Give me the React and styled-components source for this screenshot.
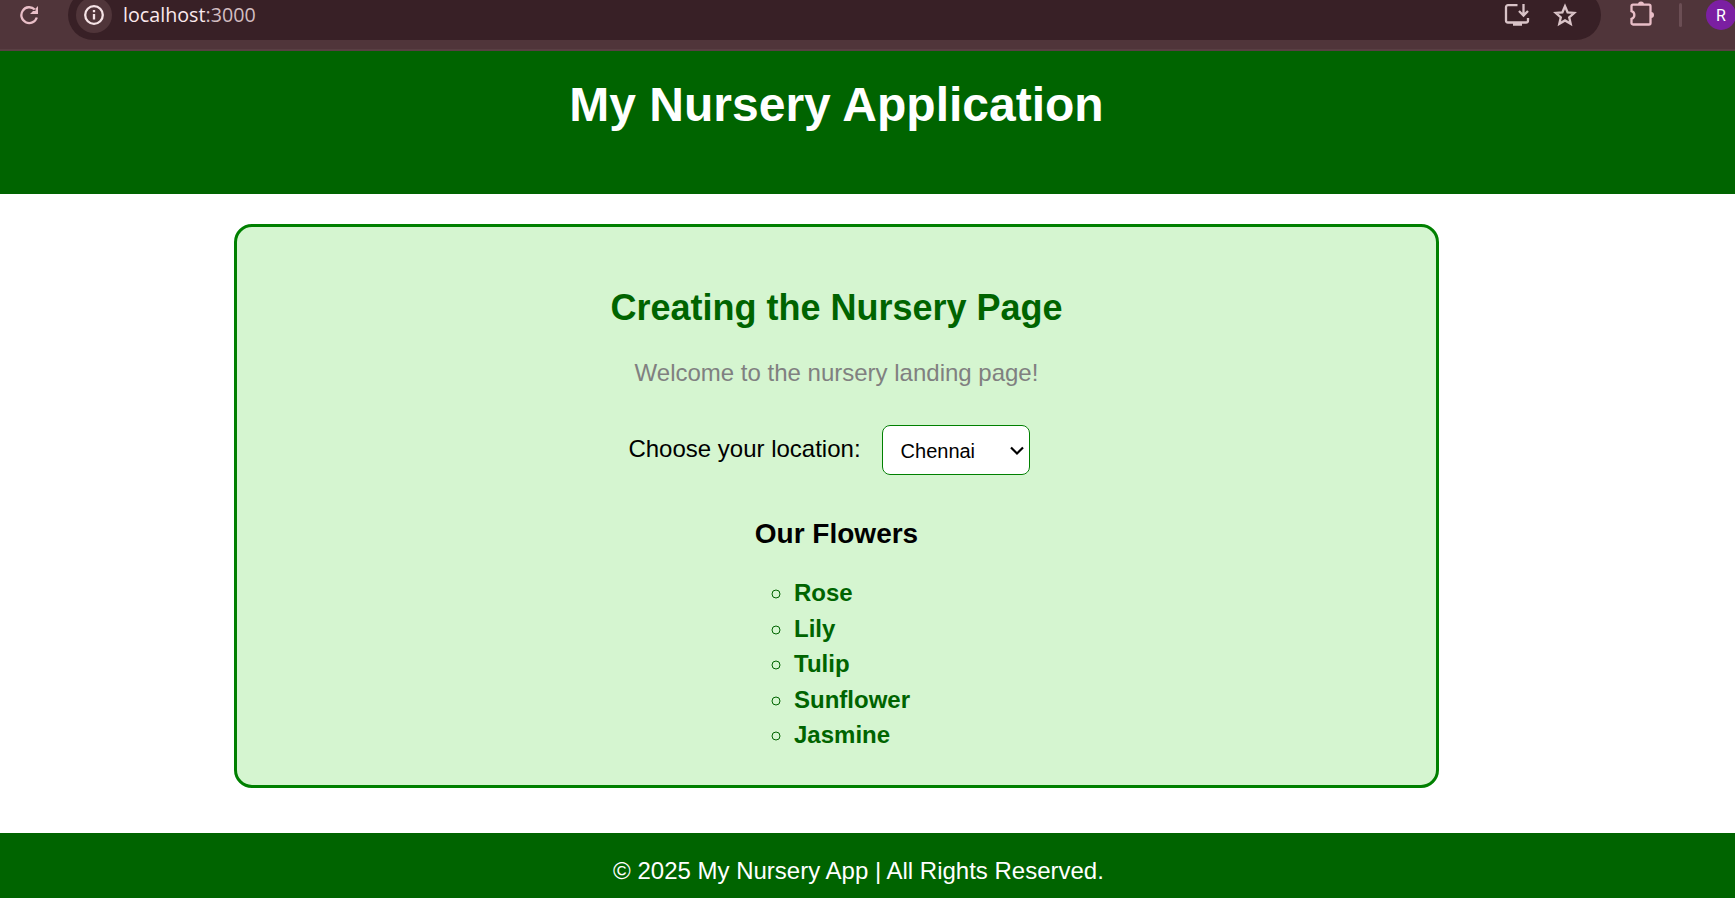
import React from "react";
import styled, { createGlobalStyle } from "styled-components";

const GlobalStyle = createGlobalStyle`
  * { box-sizing: border-box; }
  body {
    margin: 0;
    background: #fff;
    overflow: hidden;
    font-family: "Liberation Sans", Arial, sans-serif;
    font-size: 24px;
    line-height: 28px;
  }
`;

const Page = styled.div`
  display: flex;
  flex-direction: column;
  width: 1735px;
  height: 898px;
  overflow: hidden;
`;

const BrowserBar = styled.div`
  display: flex;
  align-items: flex-start;
  flex: none;
  height: 51px;
  overflow: hidden;
  background: #50353a;
  border-bottom: 2px solid #593f43;
`;

const Glyph = styled.svg`
  display: block;
  flex: none;
  width: ${(p) => p.$w}px;
  height: 30px;
  margin-left: ${(p) => p.$gap || 0}px;
  color: ${(p) => p.$color || "#e9bec7"};
  fill: none;
  stroke: currentColor;
  stroke-width: 2.3;
`;

const AddressBar = styled.div`
  display: flex;
  align-items: center;
  flex: none;
  width: 1533px;
  height: 50px;
  margin: -10px 0 0 28px;
  padding: 0 24px 0 8px;
  border-radius: 25px;
  background: #382026;
`;

const SiteInfo = styled.div`
  display: flex;
  align-items: center;
  justify-content: center;
  width: 36px;
  height: 36px;
  border-radius: 50%;
  background: #50353a;
`;

const Address = styled.div`
  flex: 1;
  margin: 0 0 0 11px;
  font: 19.7px/30px "Open Sans", "Noto Sans", sans-serif;
  color: #d2bdc1;
`;

const Host = styled.span`
  color: #fbe9ed;
`;

const Divider = styled.div`
  flex: none;
  width: 3px;
  height: 24px;
  margin: 3px 0 0 24px;
  border-radius: 2px;
  background: #6b4e54;
`;

const Avatar = styled.div`
  flex: none;
  width: 30px;
  height: 30px;
  margin-left: 24px;
  border-radius: 50%;
  background: #7b1fa2;
  color: #fff;
  font: 16px/31px Roboto, sans-serif;
  text-align: center;
`;

const Header = styled.header`
  flex: none;
  height: 143px;
  padding: 26px 62px 0 0;
  background: #006400;
`;

const Title = styled.h1`
  margin: 0;
  color: #fff;
  font-size: 48px;
  line-height: 56px;
  text-align: center;
`;

const Main = styled.main`
  display: flex;
  flex: none;
  justify-content: center;
  padding: 30px 62px 45px 0;
`;

const Card = styled.section`
  display: flex;
  flex-direction: column;
  align-items: center;
  width: 1205px;
  height: 564px;
  padding-top: 60px;
  border: 3px solid #008000;
  border-radius: 18px;
  background: #d5f5d0;
`;

const CardTitle = styled.h2`
  margin: 0;
  color: #006400;
  font-size: 36px;
  line-height: 42px;
`;

const Welcome = styled.p`
  margin: 30px 0 0;
  color: #808080;
`;

const LocationRow = styled.div`
  display: flex;
  align-items: center;
  margin: 38px 15px 0 0;
`;

const LocationLabel = styled.label`
  margin-right: 21px;
  padding-bottom: 2px;
`;

const SelectBox = styled.div`
  position: relative;
  height: 50px;
  border-radius: 8px;
  background: #fff;
`;

const LocationSelect = styled.select`
  width: 148px;
  height: 50px;
  padding: 1px 0 0 18px;
  border: 1px solid #008000;
  border-radius: 8px;
  appearance: none;
  background: transparent;
  color: #000;
  font: 20px "Liberation Sans", Arial, sans-serif;
`;

const Chevron = styled.svg`
  position: absolute;
  top: 21px;
  right: 6px;
  width: 14px;
  height: 10px;
  fill: none;
  stroke: #000;
  stroke-width: 2.2;
  pointer-events: none;
`;

const Flowers = styled.h3`
  margin: 43px 0 0;
  font-size: 28px;
  line-height: 32px;
`;

const FlowerList = styled.ul`
  width: 163px;
  margin: 28px 0 0;
  padding: 0 0 0 39px;
  list-style: circle;
  color: #006400;
`;

const Flower = styled.li`
  height: 28px;
  margin-bottom: 7.6px;
  &::marker {
    font-size: 25px;
  }
`;

const Footer = styled.footer`
  flex: 1;
  padding: 24px 18px 0 0;
  background: #006400;
  color: #fff;
  text-align: center;
`;

const flowers = ["Rose", "Lily", "Tulip", "Sunflower", "Jasmine"];

function Toolbar() {
  return (
    <BrowserBar>
      <Glyph $w={20} $gap={20} viewBox="0 0 20 30">
        <path d="M14.800 9.500A7.900 7.900 0 1 0 16.800 17.500" />
        <path d="M18 6v8h-8l3-3 2.500 0 0-2.500z" fill="currentColor" stroke="none" />
      </Glyph>
      <AddressBar>
        <SiteInfo>
          <Glyph $w={22} $color="#f5e3e6" viewBox="0 0 22 30">
            <circle cx="11" cy="15" r="8.800" />
            <path d="M11 14v5.500M11 10v2.300" />
          </Glyph>
        </SiteInfo>
        <Address><Host>localhost</Host>:3000</Address>
        <Glyph $w={26} $color="#d9c3c7" viewBox="0 0 26 30">
          <path d="M13.500 5.200H4a2 2 0 0 0-2 2v13.300a2 2 0 0 0 2 2H22a2 2 0 0 0 2-2V18" />
          <path d="M19.500 4v11M15 11l4.500 4.500 4.500-4.500" />
          <path d="M9 24h9" strokeWidth="3.500" />
        </Glyph>
        <Glyph $w={24} $gap={23} $color="#d9c3c7" viewBox="0 0 24 30">
          <path d="M12 6.200l2.600 6.100 6.600.6-5 4.400 1.500 6.500-5.700-3.400-5.700 3.400 1.500-6.500-5-4.400 6.600-.6z" />
        </Glyph>
      </AddressBar>
      <Glyph $w={26} $gap={28} viewBox="0 0 26 30">
        <path d="M4 4.700h16a1.500 1.500 0 0 1 1.500 1.500v16.800a1.500 1.500 0 0 1-1.500 1.500H4A1.500 1.500 0 0 1 2.500 23v-4.200c3.800-1.200 3.800-6.400 0-7.600V6.200A1.500 1.500 0 0 1 4 4.700z" />
        <path d="M9 4.500a3 3 0 0 1 6 0zM22 12a3 3 0 0 1 0 6z" fill="currentColor" stroke="none" />
      </Glyph>
      <Divider />
      <Avatar>R</Avatar>
    </BrowserBar>
  );
}

export default function App() {
  return (
    <Page>
      <GlobalStyle />
      <Toolbar />
      <Header>
        <Title>My Nursery Application</Title>
      </Header>
      <Main>
        <Card>
          <CardTitle>Creating the Nursery Page</CardTitle>
          <Welcome>Welcome to the nursery landing page!</Welcome>
          <LocationRow>
            <LocationLabel htmlFor="location">Choose your location:</LocationLabel>
            <SelectBox>
              <LocationSelect id="location" defaultValue="Chennai">
                <option>Chennai</option>
              </LocationSelect>
              <Chevron viewBox="0 0 14 10">
                <path d="M1 1.500l6 6 6-6" />
              </Chevron>
            </SelectBox>
          </LocationRow>
          <Flowers>Our Flowers</Flowers>
          <FlowerList>
            {flowers.map((name) => (
              <Flower key={name}><b>{name}</b></Flower>
            ))}
          </FlowerList>
        </Card>
      </Main>
      <Footer>© 2025 My Nursery App | All Rights Reserved.</Footer>
    </Page>
  );
}
